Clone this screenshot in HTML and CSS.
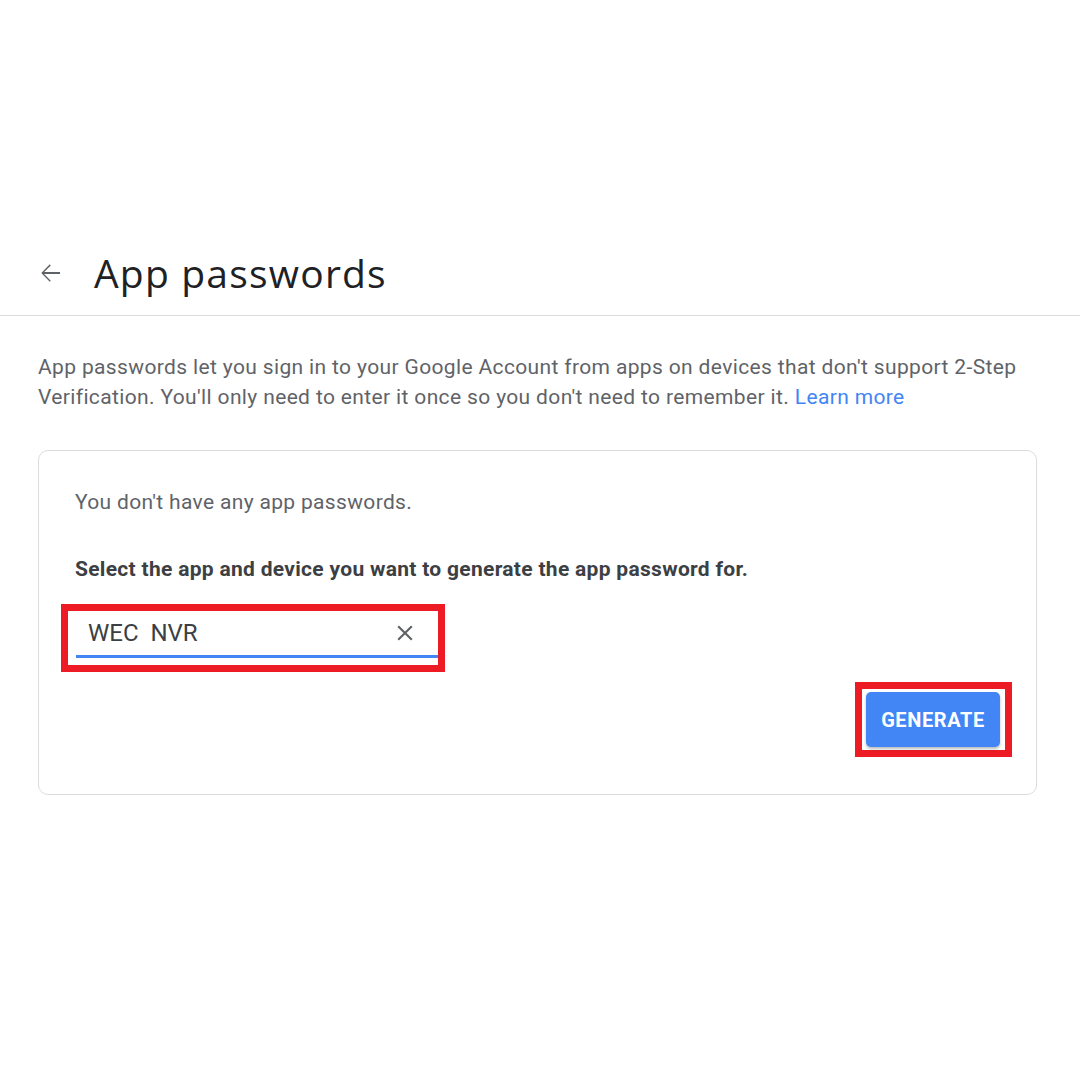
FILE: index.html
```html
<!DOCTYPE html>
<html lang="en">
  <head>
    <meta charset="UTF-8" />
    <meta name="viewport" content="width=device-width, initial-scale=1.0" />
    <title>App passwords</title>
    <link rel="stylesheet" href="styles.css">
  </head>
  <body>
    <header class="top">
      <svg class="back" width="30" height="30" viewBox="0 0 24 24">
        <path d="M20 11.2H7.3l5.3-5.3L11.8 5 5 12l6.8 7 .8-.9-5.3-5.3H20v-1.6z" fill="#5f6368" />
      </svg>
      <h1>App passwords</h1>
    </header>
    <main class="content">
      <p class="intro">
        App passwords let you sign in to your Google Account from apps on devices that don't support 2-Step
        Verification. You'll only need to enter it once so you don't need to remember it.
        <a href="#">Learn more</a>
      </p>
      <section class="card">
        <p class="empty">You don't have any app passwords.</p>
        <p class="select">Select the app and device you want to generate the app password for.</p>
        <div class="mark mark-field">
          <div class="field">
            <span class="value">WEC&nbsp; NVR</span>
            <svg class="clear" width="26" height="26" viewBox="0 0 24 24">
              <path d="M19 6.41L17.59 5 12 10.59 6.41 5 5 6.41 10.59 12 5 17.59 6.41 19 12 13.41 17.59 19 19 17.59 13.41 12z" fill="#5f6368" />
            </svg>
          </div>
        </div>
        <div class="actions">
          <div class="mark mark-btn">
            <button class="generate">GENERATE</button>
          </div>
        </div>
      </section>
    </main>
  </body>
</html>
```

FILE: styles.css
```css
* {
  margin: 0;
  padding: 0;
  box-sizing: border-box;
}
body {
  background: #fff;
  font-family: Roboto, "Liberation Sans", sans-serif;
}
.top {
  display: flex;
  align-items: center;
  margin-top: 244px;
  height: 72px;
  padding: 0 0 14px 35px;
  border-bottom: 1px solid #dadce0;
}
.back {
  display: block;
}
.top h1 {
  margin-left: 29px;
  font-family: "Open Sans", sans-serif;
  font-weight: 400;
  font-size: 39px;
  letter-spacing: 1.2px;
  color: #202124;
}
.content {
  padding: 36px 43px 0 38px;
}
.intro {
  font-size: 21px;
  letter-spacing: 0.36px;
  line-height: 30px;
  color: #5f6368;
}
.intro a {
  color: #4285f4;
  text-decoration: none;
}
.card {
  margin-top: 38px;
  border: 1px solid #dadce0;
  border-radius: 10px;
  padding: 36px 36px 37px 36px;
}
.empty {
  font-size: 21px;
  letter-spacing: 0.33px;
  line-height: 30px;
  color: #5f6368;
}
.select {
  margin-top: 37px;
  font-size: 21px;
  letter-spacing: 0.3px;
  line-height: 30px;
  font-weight: 700;
  color: #3c4043;
}
.mark {
  border: 7px solid #ed1c24;
}
.mark-field {
  width: 384px;
  margin: 20px 0 0 -14px;
  padding: 2px 0 7px 8px;
}
.field {
  display: flex;
  align-items: center;
  justify-content: space-between;
  height: 45px;
  padding: 0 20px 2px 12px;
  border-bottom: 3px solid #4285f4;
}
.value {
  font-size: 24px;
  color: #3c4043;
}
.clear {
  display: block;
}
.actions {
  display: flex;
  justify-content: flex-end;
  margin: 10px -12px 0 0;
}
.mark-btn {
  padding: 3px 5px 3px 4px;
}
.generate {
  width: 134px;
  height: 55px;
  border: none;
  border-radius: 5px;
  background: #4285f4;
  color: #fff;
  font-family: Roboto, sans-serif;
  font-weight: 700;
  font-size: 20px;
  letter-spacing: 0.6px;
  box-shadow: 0 2px 3px rgba(60, 64, 67, 0.35);
}
```
